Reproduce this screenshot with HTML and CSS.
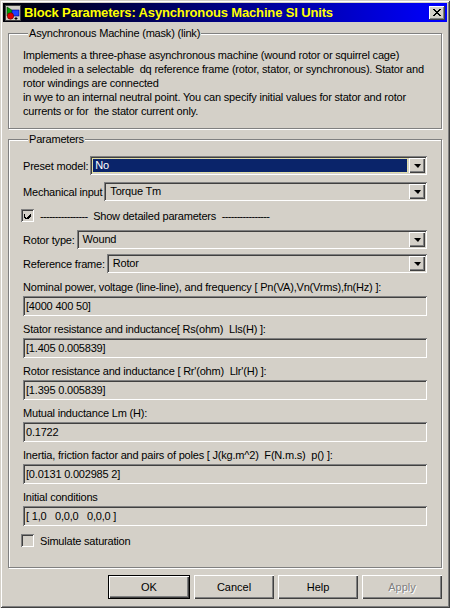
FILE: index.html
```html
<!DOCTYPE html>
<html lang="en">
<head>
  <meta charset="UTF-8" />
  <title>Block Parameters: Asynchronous Machine SI Units</title>
  <link rel="stylesheet" href="styles.css">
</head>
<body>
  <div class="window">
    <div class="titlebar">
      <svg class="title-icon" width="16" height="16" viewBox="0 0 16 16">
        <rect x="0.5" y="0.5" width="15" height="15" fill="#d4d0c8" stroke="#404040"/>
        <polygon points="2,2 2,11 9,6.5" fill="#00a000" stroke="#004000" stroke-width="0.6"/>
        <rect x="7" y="5" width="7" height="6" fill="#2040ff" stroke="#000080" stroke-width="0.6"/>
        <circle cx="5.5" cy="11" r="3.2" fill="#e00000" stroke="#600000" stroke-width="0.6"/>
        <path d="M11 12v3M9.5 13.5h3" stroke="#000" stroke-width="1"/>
      </svg>
      <span class="title-text">Block Parameters: Asynchronous Machine SI Units</span>
      <button class="close-btn">
        <svg width="8" height="7" viewBox="0 0 8 7">
          <path d="M0 0L7 7M1 0L8 7M7 0L0 7M8 0L1 7" stroke="#000" stroke-width="1"/>
        </svg>
      </button>
    </div>

    <fieldset class="group group-desc">
      <legend>Asynchronous Machine (mask) (link)</legend>
      <div class="desc">
        <span class="desc-line">Implements a three-phase asynchronous machine (wound rotor or squirrel cage)</span>
        <span class="desc-line">modeled in a selectable  dq reference frame (rotor, stator, or synchronous). Stator and</span>
        <span class="desc-line">rotor windings are connected</span>
        <span class="desc-line">in wye to an internal neutral point. You can specify initial values for stator and rotor</span>
        <span class="desc-line">currents or for  the stator current only.</span>
      </div>
    </fieldset>

    <fieldset class="group group-params">
      <legend>Parameters</legend>

      <div class="combo-row row-preset">
        <span class="combo-label">Preset model:</span>
        <div class="combo">
          <span class="combo-value focused">No</span>
          <span class="combo-arrow"></span>
        </div>
      </div>

      <div class="combo-row">
        <span class="combo-label">Mechanical input</span>
        <div class="combo">
          <span class="combo-value">Torque Tm</span>
          <span class="combo-arrow"></span>
        </div>
      </div>

      <div class="check-row">
        <span class="checkbox checked">
          <svg width="7" height="7" viewBox="0 0 7 7">
            <path d="M0 2h1v3h1v1h1v-1h1v-1h1v-1h1v-1h1v3h-1v1h-1v1h-1v1h-2v-1h-1v-1h-1z" fill="#000"/>
          </svg>
        </span>
        <span class="check-label"><span class="dashes">----------------</span>  Show detailed parameters  <span class="dashes">----------------</span></span>
      </div>

      <div class="combo-row">
        <span class="combo-label">Rotor type:</span>
        <div class="combo">
          <span class="combo-value">Wound</span>
          <span class="combo-arrow"></span>
        </div>
      </div>

      <div class="combo-row row-last">
        <span class="combo-label">Reference frame:</span>
        <div class="combo">
          <span class="combo-value">Rotor</span>
          <span class="combo-arrow"></span>
        </div>
      </div>

      <div class="field">
        <div class="field-label">Nominal power, voltage (line-line), and frequency [ Pn(VA),Vn(Vrms),fn(Hz) ]:</div>
        <div class="edit">[4000 400 50]</div>
      </div>
      <div class="field">
        <div class="field-label">Stator resistance and inductance[ Rs(ohm)  Lls(H) ]:</div>
        <div class="edit">[1.405 0.005839]</div>
      </div>
      <div class="field">
        <div class="field-label">Rotor resistance and inductance [ Rr'(ohm)  Llr'(H) ]:</div>
        <div class="edit">[1.395 0.005839]</div>
      </div>
      <div class="field">
        <div class="field-label">Mutual inductance Lm (H):</div>
        <div class="edit">0.1722</div>
      </div>
      <div class="field">
        <div class="field-label">Inertia, friction factor and pairs of poles [ J(kg.m^2)  F(N.m.s)  p() ]:</div>
        <div class="edit">[0.0131 0.002985 2]</div>
      </div>
      <div class="field">
        <div class="field-label">Initial conditions</div>
        <div class="edit">[ 1,0   0,0,0   0,0,0 ]</div>
      </div>

      <div class="check-row row-sat">
        <span class="checkbox"></span>
        <span class="check-label">Simulate saturation</span>
      </div>
    </fieldset>

    <div class="buttons">
      <button class="btn btn-default">OK</button>
      <button class="btn">Cancel</button>
      <button class="btn">Help</button>
      <button class="btn btn-disabled">Apply</button>
    </div>
  </div>
</body>
</html>
```

FILE: styles.css
```css
* {
  box-sizing: border-box;
}
body {
  margin: 0;
  background-color: #d4d0c8;
  font-family: "Liberation Sans", Arial, sans-serif;
  font-size: 11px;
  letter-spacing: -0.2px;
  color: #000;
}
.window {
  width: 450px;
  height: 608px;
  padding: 3px;
  background-color: #d4d0c8;
  box-shadow: inset 1px 1px #d4d0c8, inset -1px -1px #404040,
              inset 2px 2px #ffffff, inset -2px -2px #808080;
  display: flex;
  flex-direction: column;
}

/* title bar */
.titlebar {
  height: 19px;
  display: flex;
  align-items: center;
  padding: 0 2px 0 2px;
  background: linear-gradient(to right, #000008, #0000ff);
}
.title-icon {
  flex: none;
}
.title-text {
  margin-left: 3px;
  color: #ffff00;
  font-weight: bold;
  font-size: 13px;
  letter-spacing: -0.15px;
  white-space: nowrap;
}
.close-btn {
  margin-left: auto;
  width: 16px;
  height: 14px;
  padding: 0;
  border: none;
  background-color: #d4d0c8;
  box-shadow: inset -1px -1px #404040, inset 1px 1px #ffffff, inset -2px -2px #808080;
  display: flex;
  align-items: center;
  justify-content: center;
}

/* group boxes */
.group {
  margin: 5px 5px 0;
  padding: 0 14px;
  border: 1px solid #808080;
  box-shadow: inset 1px 1px #ffffff, 1px 1px #ffffff;
  min-width: 0;
}
.group legend {
  margin-left: 5px;
  padding: 0 1px;
  line-height: 13px;
  background-color: #d4d0c8;
}
.group-desc {
  padding-top: 8px;
  padding-bottom: 10px;
}
.desc-line {
  display: block;
  line-height: 14px;
  white-space: pre;
}
.group-params {
  margin-top: 4px;
  padding-top: 10px;
  flex: 1;
  display: flex;
  flex-direction: column;
}

/* combo boxes */
.combo-row {
  display: flex;
  align-items: center;
  height: 19px;
  margin-bottom: 5px;
}
.row-preset {
  margin-bottom: 7px;
}
.row-last {
  margin-bottom: 8px;
}
.combo-label {
  white-space: nowrap;
  margin-right: 2px;
}
.combo {
  flex: 1;
  height: 19px;
  display: flex;
  padding: 2px;
  box-shadow: inset 1px 1px #808080, inset -1px -1px #ffffff,
              inset 2px 2px #404040, inset -2px -2px #d4d0c8;
}
.combo-value {
  flex: 1;
  padding-left: 4px;
  line-height: 15px;
}
.combo-value.focused {
  margin: 1px 2px 1px 1px;
  padding-left: 2px;
  line-height: 13px;
  background-color: #0a246a;
  color: #ffffff;
  outline: 1px dotted #e8e890;
}
.combo-arrow {
  width: 16px;
  height: 15px;
  display: flex;
  align-items: center;
  justify-content: center;
  box-shadow: inset 1px 1px #ffffff, inset -1px -1px #404040, inset -2px -2px #808080;
}
.combo-arrow::after {
  content: "";
  border-left: 4px solid transparent;
  border-right: 3px solid transparent;
  border-top: 4px solid #000;
  margin-top: 1px;
}

/* checkboxes */
.check-row {
  display: flex;
  align-items: center;
  height: 19px;
  margin-bottom: 5px;
}
.checkbox {
  width: 13px;
  height: 13px;
  margin-left: -2px;
  margin-right: 6px;
  display: flex;
  align-items: center;
  justify-content: center;
  background-color: #d4d0c8;
  box-shadow: inset 1px 1px #808080, inset -1px -1px #ffffff,
              inset 2px 2px #404040, inset -2px -2px #d4d0c8;
}
.check-label {
  white-space: pre;
}
.dashes {
  letter-spacing: -0.7px;
}
.row-sat {
  height: 15px;
}

/* edit fields */
.field-label {
  line-height: 13px;
  margin-bottom: 2px;
  white-space: pre;
}
.edit {
  height: 20px;
  line-height: 16px;
  padding: 2px 3px;
  margin-bottom: 7px;
  white-space: pre;
  box-shadow: inset 1px 1px #808080, inset -1px -1px #ffffff,
              inset 2px 2px #404040, inset -2px -2px #d4d0c8;
}

/* dialog buttons */
.buttons {
  display: flex;
  justify-content: flex-end;
  gap: 4px;
  margin: 7px 5px 6px 0;
}
.btn {
  width: 80px;
  height: 24px;
  padding: 0;
  border: none;
  font-family: "Liberation Sans", Arial, sans-serif;
  font-size: 11px;
  color: #000;
  background-color: #d4d0c8;
  box-shadow: inset 1px 1px #ffffff, inset -1px -1px #404040, inset -2px -2px #808080;
}
.btn-default {
  width: 82px;
  box-shadow: inset 0 0 0 1px #000, inset 2px 2px #ffffff,
              inset -2px -2px #404040, inset -3px -3px #808080;
}
.btn-disabled {
  color: #808080;
  text-shadow: 1px 1px #ffffff;
}
```
